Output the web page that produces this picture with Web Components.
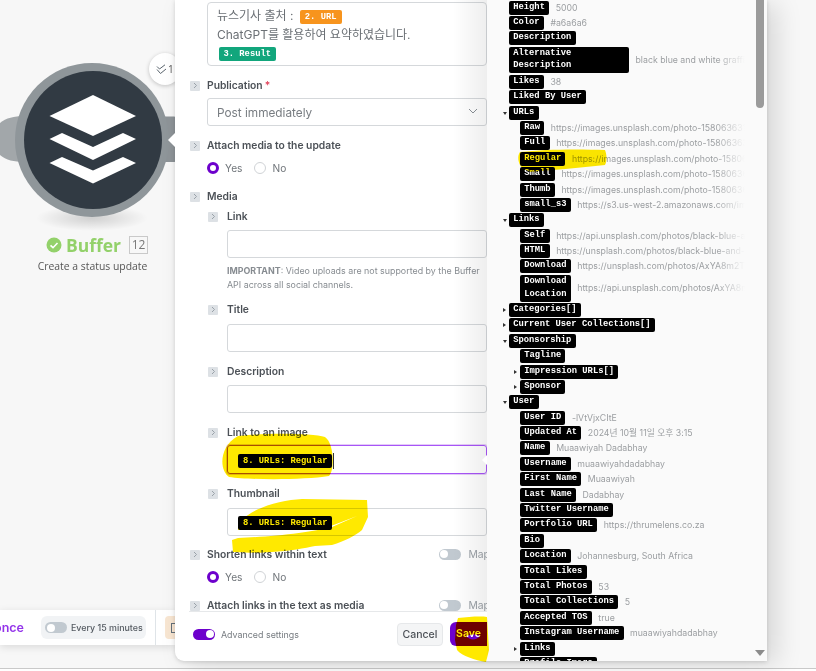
<!DOCTYPE html>
<html lang="ko"><head><meta charset="utf-8"><title>Buffer</title>
<style>
html,body{margin:0;padding:0;width:816px;height:671px;overflow:hidden;background:#fff;font-family:Inter,"Noto Sans CJK KR",sans-serif}
</style></head><body>
<app-shell>
  <scenario-canvas slot="canvas">
    <flow-node></flow-node>
    <schedule-bar></schedule-bar>
  </scenario-canvas>
  <module-dialog slot="dialog">
    <form-column slot="form">
      <rich-box>뉴스기사 출처 : <data-pill tone="orange">2. URL</data-pill><br>ChatGPT를 활용하여 요약하였습니다.<br><data-pill tone="green">3. Result</data-pill></rich-box>
      <field-label style="margin-top:12px" required>Publication</field-label>
      <text-box style="margin-top:6px" select>Post immediately</text-box>
      <field-label style="margin-top:12px">Attach media to the update</field-label>
      <radio-pair style="margin-top:9px"></radio-pair>
      <field-label style="margin-top:14px">Media</field-label>
      <field-label style="margin-top:6px" nested>Link</field-label>
      <text-box style="margin-top:7px" nested></text-box>
      <help-note style="margin-top:6px"><div><b>IMPORTANT</b>: Video uploads are not supported by the Buffer</div><div>API across all social channels.</div></help-note>
      <field-label style="margin-top:10px" nested>Title</field-label>
      <text-box style="margin-top:8px" nested></text-box>
      <field-label style="margin-top:12px" nested>Description</field-label>
      <text-box style="margin-top:7px" nested></text-box>
      <field-label style="margin-top:12px" nested>Link to an image</field-label>
      <text-box style="margin-top:6px" nested focus><data-pill tone="black">8. URLs: Regular</data-pill></text-box>
      <field-label style="margin-top:12px" nested>Thumbnail</field-label>
      <text-box style="margin-top:8px" nested><data-pill tone="black">8. URLs: Regular</data-pill></text-box>
      <field-label style="margin-top:11px" map>Shorten links within text</field-label>
      <radio-pair style="margin-top:9px"></radio-pair>
      <field-label style="margin-top:14px" map>Attach links in the text as media</field-label>
    </form-column>
    <dialog-footer slot="footer"></dialog-footer>
    <data-panel slot="panel"></data-panel>
  </module-dialog>
  <highlight-layer slot="ink"></highlight-layer>
</app-shell>
<script>
const def=(name,html,init)=>customElements.define(name,class extends HTMLElement{
  connectedCallback(){ if(this.shadowRoot) return; const r=this.attachShadow({mode:'open'}); r.innerHTML=typeof html==='function'?html(this):html; if(init) init(this,r); }
});
const MONO='"Liberation Mono","DejaVu Sans Mono",monospace';

def('app-shell',`<style>
:host{display:block;position:relative;width:816px;height:671px;overflow:hidden}
.main{display:flex;height:668px;background:#f7f7f7}
.bottom{height:3px;border-top:1px solid #c9c9c9;box-sizing:border-box;background:#fff}
</style><div class="main"><slot name="canvas"></slot><slot name="dialog"></slot></div><div class="bottom"></div><slot name="ink"></slot>`);

def('scenario-canvas',`<style>
:host{display:flex;flex-direction:column;justify-content:flex-end;position:relative;width:175px;height:668px;padding-bottom:23px;box-sizing:border-box;flex:none}
</style><slot></slot>`);

def('flow-node',`<style>
:host{position:absolute;left:0;top:0;width:175px;height:290px;display:block;font-family:"Open Sans",sans-serif}
svg{position:absolute;left:0;top:0}
.cap{position:absolute;left:0;top:235px;width:194px;display:flex;justify-content:center;align-items:center;gap:0}
.name{font:700 17.500px/20px "Open Sans",sans-serif;color:#93d16a;margin:0 8px 0 4px}
.num{box-sizing:border-box;width:19px;height:18px;border:1px solid #c9c9c9;color:#777;font:12px/16px "Open Sans",sans-serif;text-align:center}
.sub{position:absolute;left:0;top:259px;width:185px;text-align:center;font:10.400px/14px "Open Sans",sans-serif;color:#555}
.badge{position:absolute;left:149px;top:53px;width:32px;height:32px;border-radius:50%;background:#fff;box-shadow:0 1px 4px rgba(0,0,0,.22);display:flex;align-items:center;gap:1px;padding-left:7px;box-sizing:border-box;font:10px "Open Sans",sans-serif;color:#555}
</style>
<svg width="175" height="235" viewBox="0 0 175 235">
<defs><radialGradient id="s"><stop offset="0" stop-color="#000" stop-opacity=".16"/><stop offset="1" stop-color="#000" stop-opacity="0"/></radialGradient></defs>
<ellipse cx="92" cy="218" rx="56" ry="13" fill="url(#s)"/>
<path d="M0 123C6 118 14 116 24 116V162C14 162 6 160 0 155Z" fill="#a2a7aa"/>
<rect x="160" y="116.500" width="16" height="45.500" rx="2" fill="#8e9498"/>
<circle cx="92" cy="140" r="77" fill="#8f969a"/>
<circle cx="93" cy="140" r="69" fill="#313a43"/>
<path fill="#fff" d="M49.500 116 93 95 136 116 93 136Z"/>
<path fill="#fff" d="M49.500 139 62 133 93 147 123 133 136 139 93 160Z"/>
<path fill="#fff" d="M49.500 163 62 157 93 170.500 123 157 136 163 93 183.500Z"/>
</svg>
<div class="badge"><svg style="position:static" width="11" height="11" viewBox="0 0 11 11" fill="none" stroke="#59636c" stroke-width="1"><path d="M1 2.500 3.500 5 9 .8M1 5.500 4.500 9.500 10 5"/></svg><span>1</span></div>
<div class="cap"><svg style="position:static" width="16" height="16" viewBox="0 0 16 16"><circle cx="8" cy="8" r="7.500" fill="#93d16a"/><path d="M4.500 8.300 7 10.700 11.500 6" fill="none" stroke="#fff" stroke-width="1.600"/></svg><span class="name">Buffer</span><span class="num">12</span></div>
<div class="sub">Create a status update</div>`);

def('schedule-bar',`<style>
:host{display:flex;align-items:center;justify-content:flex-end;height:35px;background:#fff;box-shadow:0 2px 8px rgba(0,0,0,.12);overflow:hidden;box-sizing:border-box}
.once{font:600 12.500px/14px Inter,sans-serif;color:#9333ea;flex:none;margin-right:17px}
.pill{flex:none;width:105px;height:23px;background:#f1f3f5;border-radius:6px;display:flex;align-items:center;box-sizing:border-box;padding-left:4px;gap:4px;font:500 8.900px Inter,sans-serif;color:#555b62;white-space:nowrap}
.sep{flex:none;width:1px;height:35px;background:#dfe4e8;margin:0 9px 0 9px}
.tile{flex:none;width:10px;height:23px;background:#f8e6d2;border-radius:4px 0 0 4px;display:flex;align-items:center;overflow:hidden;padding-left:6px;box-sizing:border-box}
.tile i{display:block;width:8px;height:10px;flex:none;border:1px solid #64707a;box-sizing:border-box}
</style><span class="once">once</span><div class="pill"><toggle-switch></toggle-switch><span>Every 15 minutes</span></div><div class="sep"></div><div class="tile"><i></i></div>`);

def('toggle-switch',h=>`<style>
:host{display:inline-block;width:22px;height:11px;border-radius:6px;background:${h.hasAttribute('on')?'#6d00cc':'#c1c9d0'};position:relative;flex:none}
i{position:absolute;top:1.500px;${h.hasAttribute('on')?'right':'left'}:1.500px;width:8px;height:8px;border-radius:50%;background:#fff}
</style><i></i>`);

def('module-dialog',`<style>
:host{display:grid;grid-template-columns:312px 280px;grid-template-rows:611px 50px;width:592px;height:661px;background:#fff;border-radius:0 0 0 9px;box-shadow:10px 4px 26px rgba(0,0,0,.13),0 1px 4px rgba(0,0,0,.15);position:relative;flex:none;overflow:visible}
.tip{position:absolute;left:-7px;top:133px;width:0;height:0;border:7px solid transparent;border-left:0;border-right:7px solid #fff}
.tip2{position:absolute;left:307px;top:455px;width:0;height:0;border:5px solid transparent;border-left:0;border-right:5px solid #fff;z-index:3}
::slotted([slot=panel]){grid-column:2;grid-row:1/3}
</style><div class="tip"></div><div class="tip2"></div><slot name="form"></slot><slot name="footer"></slot><slot name="panel"></slot>`);

def('form-column',`<style>
:host{display:block;grid-column:1;grid-row:1;overflow:hidden;position:relative;padding:2px 0.500px 0 32px;box-sizing:border-box;height:611px;font-family:Inter,"Noto Sans CJK KR",sans-serif}
.fade{position:absolute;right:0;top:0;bottom:0;width:34px;background:linear-gradient(90deg,rgba(0,0,0,0),rgba(0,0,0,.065));pointer-events:none;z-index:2}
</style><slot></slot><div class="fade"></div>`);

def('rich-box',`<style>
:host{display:block;box-sizing:border-box;height:64px;border:1px solid #d5d8db;border-radius:4px;padding:4px 9px;font:12px/18.500px Inter,"Noto Sans CJK KR",sans-serif;color:#6b7075}
</style><slot></slot>`);

def('data-pill',h=>{const t=h.getAttribute('tone');const bg={orange:'#f7941d',green:'#12a67c',black:'#000'}[t];
return `<style>
:host{display:inline-block;background:${bg};color:#fff;font:700 8.800px/14px ${MONO};padding:0 ${t==='green'?4.5:5}px;border-radius:2px;vertical-align:${t==='black'?'middle':'1px'};white-space:nowrap;${t==='green'?'margin-left:2px;':''}${t==='orange'?'margin-left:3px;':''}}
</style><slot></slot>`});

def('field-label',h=>{const n=h.hasAttribute('nested'),m=h.hasAttribute('map');
return `<style>
:host{display:flex;align-items:center;box-sizing:border-box;height:14px;font:600 10.300px/14px Inter,sans-serif;color:#4c5157;margin-left:${n?1:-17}px;white-space:nowrap}
.t{width:10px;height:10px;background:#dde1e5;border-radius:1px;display:flex;align-items:center;justify-content:center;margin-right:${n?9:7}px;flex:none;margin-top:1px}
.t svg{display:block}
.star{color:#e2445c;margin-left:2px}
.map{margin-left:auto;display:flex;align-items:center;gap:8px;color:#9aa0a6;font-weight:400;width:48px;overflow:hidden;flex:none}
</style><span class="t"><svg width="6" height="7" viewBox="0 0 6 7" fill="none" stroke="#9aa2a9" stroke-width="1"><path d="M2 1 4.500 3.500 2 6"/></svg></span><slot></slot>${h.hasAttribute('required')?'<span class="star">*</span>':''}${m?'<span class="map"><toggle-switch></toggle-switch><span>Map</span></span>':''}`});

def('text-box',h=>{const n=h.hasAttribute('nested'),f=h.hasAttribute('focus'),s=h.hasAttribute('select');
return `<style>
:host{display:flex;align-items:center;box-sizing:border-box;height:${f?29:28}px;margin-left:${n?20:0}px;border:${f?'1.500px solid #a855f7':'1px solid #d5d8db'};${f?'box-shadow:0 0 0 1px #e3ccf8;':''}border-radius:3px;padding:${n?2:1}px 0 0 ${n?10:9}px;font:11.800px/16px Inter,sans-serif;color:#777c81;position:relative}
svg{position:absolute;right:8px;top:9px}
.caret{display:${f?'block':'none'};width:1px;height:16px;background:#333;margin-left:1px}
</style><slot></slot><span class="caret"></span>${s?'<svg width="10" height="7" viewBox="0 0 10 7" fill="none" stroke="#8a9096" stroke-width="1"><path d="M1 1 5 5 9 1"/></svg>':''}`});

def('radio-pair',`<style>
:host{display:flex;align-items:center;height:14px;font:10.200px/14px Inter,sans-serif;color:#70757a}
i{width:12px;height:12px;box-sizing:border-box;border-radius:50%;flex:none;display:block}
.on{border:3.500px solid #6d00cc;background:#fff;margin-right:6px}
.off{border:1px solid #d0d3d6;margin:0 6px 0 12px}
</style><i class="on"></i><span>Yes</span><i class="off"></i><span>No</span>`);

def('help-note',`<style>
:host{display:block;margin-left:20px;font:8.900px/14px Inter,sans-serif;color:#878c91;white-space:nowrap}
::slotted(div){display:block}
</style><slot></slot>`);

def('dialog-footer',`<style>
:host{grid-column:1;grid-row:2;display:flex;align-items:center;border-top:1px solid #e6e8ea;box-sizing:border-box;margin-left:14px;padding:0 0 5px 4px;background:#fff;position:relative}
.adv{font:8.900px Inter,sans-serif;color:#777c81;margin-left:6px}
.cancel{margin-left:auto;box-sizing:border-box;width:46px;height:23px;background:#f4f5f6;border:1px solid #e6e8ea;border-radius:4px;font:500 10.500px/21px Inter,sans-serif;color:#4c5157;text-align:center}
.save{margin-left:7px;width:37px;height:24px;background:#6d00cc;border-radius:6px 0 0 6px;color:#fff;font:600 10.500px/24px Inter,sans-serif;text-align:center}
</style><toggle-switch on></toggle-switch><span class="adv">Advanced settings</span><span class="cancel">Cancel</span><span class="save">Save</span>`);

const ROWS=[
['Height','5000',0],['Color','#a6a6a6',0],['Description','',0],['Alternative<br>Description','black blue and white graffiti',0,'',1],['Likes','38',0],['Liked By User','',0],
['URLs','',0,'d'],['Raw','https://images.unsplash.com/photo-1580636310',1],['Full','https://images.unsplash.com/photo-1580636310',1],['Regular','https://images.unsplash.com/photo-1580636310',1],['Small','https://images.unsplash.com/photo-1580636310',1],['Thumb','https://images.unsplash.com/photo-1580636310',1],['small_s3','https://s3.us-west-2.amazonaws.com/images',1],
['Links','',0,'d'],['Self','https://api.unsplash.com/photos/black-blue-and',1],['HTML','https://unsplash.com/photos/black-blue-and-white',1],['Download','https://unsplash.com/photos/AxYA8m2Tabc',1],['Download<br>Location','https://api.unsplash.com/photos/AxYA8m2T',1],
['Categories[]','',0,'r'],['Current User Collections[]','',0,'r'],['Sponsorship','',0,'d'],['Tagline','',1],['Impression URLs[]','',1,'r'],['Sponsor','',1,'r'],
['User','',0,'d'],['User ID','-lVtVjxCItE',1],['Updated At','2024년 10월 11일 오후 3:15',1],['Name','Muaawiyah Dadabhay',1],['Username','muaawiyahdadabhay',1],['First Name','Muaawiyah',1],['Last Name','Dadabhay',1],['Twitter Username','',1],['Portfolio URL','https://thrumelens.co.za',1],['Bio','',1],['Location','Johannesburg, South Africa',1],['Total Likes','',1],['Total Photos','53',1],['Total Collections','5',1],['Accepted TOS','true',1],['Instagram Username','muaawiyahdadabhay',1],['Links','',1,'r'],['Profile Image','',1,'r']];

def('data-panel',()=>`<style>
:host{display:block;position:relative;background:#fafafa;overflow:hidden;height:661px;box-sizing:border-box;padding:0.500px 0 0 14px}
.list{display:flex;flex-direction:column;gap:1.400px}
.row{display:flex;align-items:center;position:relative;white-space:nowrap;width:244px;box-sizing:border-box;overflow:hidden;padding-left:8px}
.row.c{padding-left:19px}
.arrow{position:absolute;top:5px;left:1.500px;width:0;height:0}
.row.c .arrow{left:12.500px}
.d{border:2.500px solid transparent;border-top:3px solid #333;border-bottom:0;margin-top:1px}
.r{border:2.500px solid transparent;border-left:3px solid #333;border-right:0}
.k{background:#000;color:#fff;font:700 8.800px/12.700px ${MONO};padding:0 4.250px 1.300px;border-radius:2px;flex:none}
.k.wide{width:120px;box-sizing:border-box}
.v{font:8.750px/13px Inter,"Noto Sans CJK KR",sans-serif;color:#9b9ea1;margin-left:6.500px;padding-top:1px}
.fade{position:absolute;top:0;bottom:0;left:228px;width:30px;background:linear-gradient(90deg,rgba(250,250,250,0),#fafafa)}
.thumb{position:absolute;left:269px;top:0;width:8px;height:108px;border-radius:0 0 4px 4px;background:#9b9b9b}
.down{position:absolute;left:267.500px;top:650px;width:0;height:0;border:5px solid transparent;border-top:6px solid #8c8c8c;border-bottom:0}
</style><div class="list">${ROWS.map(r=>`<div class="row ${r[2]?'c':''}">${r[3]?`<span class="arrow ${r[3]}"></span>`:''}<span class="k ${r[4]?'wide':''}">${r[0]}</span>${r[1]?`<span class="v">${r[1]}</span>`:''}</div>`).join('')}</div><div class="fade"></div><div class="thumb"></div><div class="down"></div>`);

def('highlight-layer',`<style>
:host{position:absolute;left:0;top:0;z-index:10;width:816px;height:671px;mix-blend-mode:multiply;pointer-events:none;display:block}
svg{display:block}
</style><svg width="816" height="671" viewBox="0 0 816 671"><g fill="#ffe900" fill-rule="evenodd">
<path d="M238 436C262 433 312 433 325 437 334 443 335 470 329 476 305 480 250 480 229 477 219 470 219 446 238 436Z"/>
<path d="M367 500 302 499C285 500 262 505 248 515 243 518 239 522 238 530L331 526 357 516 332 527C315 532 270 537 238 538L232 540 233 552C250 553 262 553 272 552 290 551 305 548 315 546L332 545C345 541 355 536 362 530L368 517Z"/>
<path d="M520 152C545 149 580 149 605 150 607 155 607 161 605 165 580 168 550 170 530 172L522 168C518 163 517 156 520 152Z"/>
<path d="M458 618C468 617 480 616 487 617L489 650 486 662C475 660 462 656 457 650L455 640 456 625ZM466 636C471 634 476 634 480 636 477 640 470 641 466 636Z"/>
</g></svg>`);
</script>
</body></html>
